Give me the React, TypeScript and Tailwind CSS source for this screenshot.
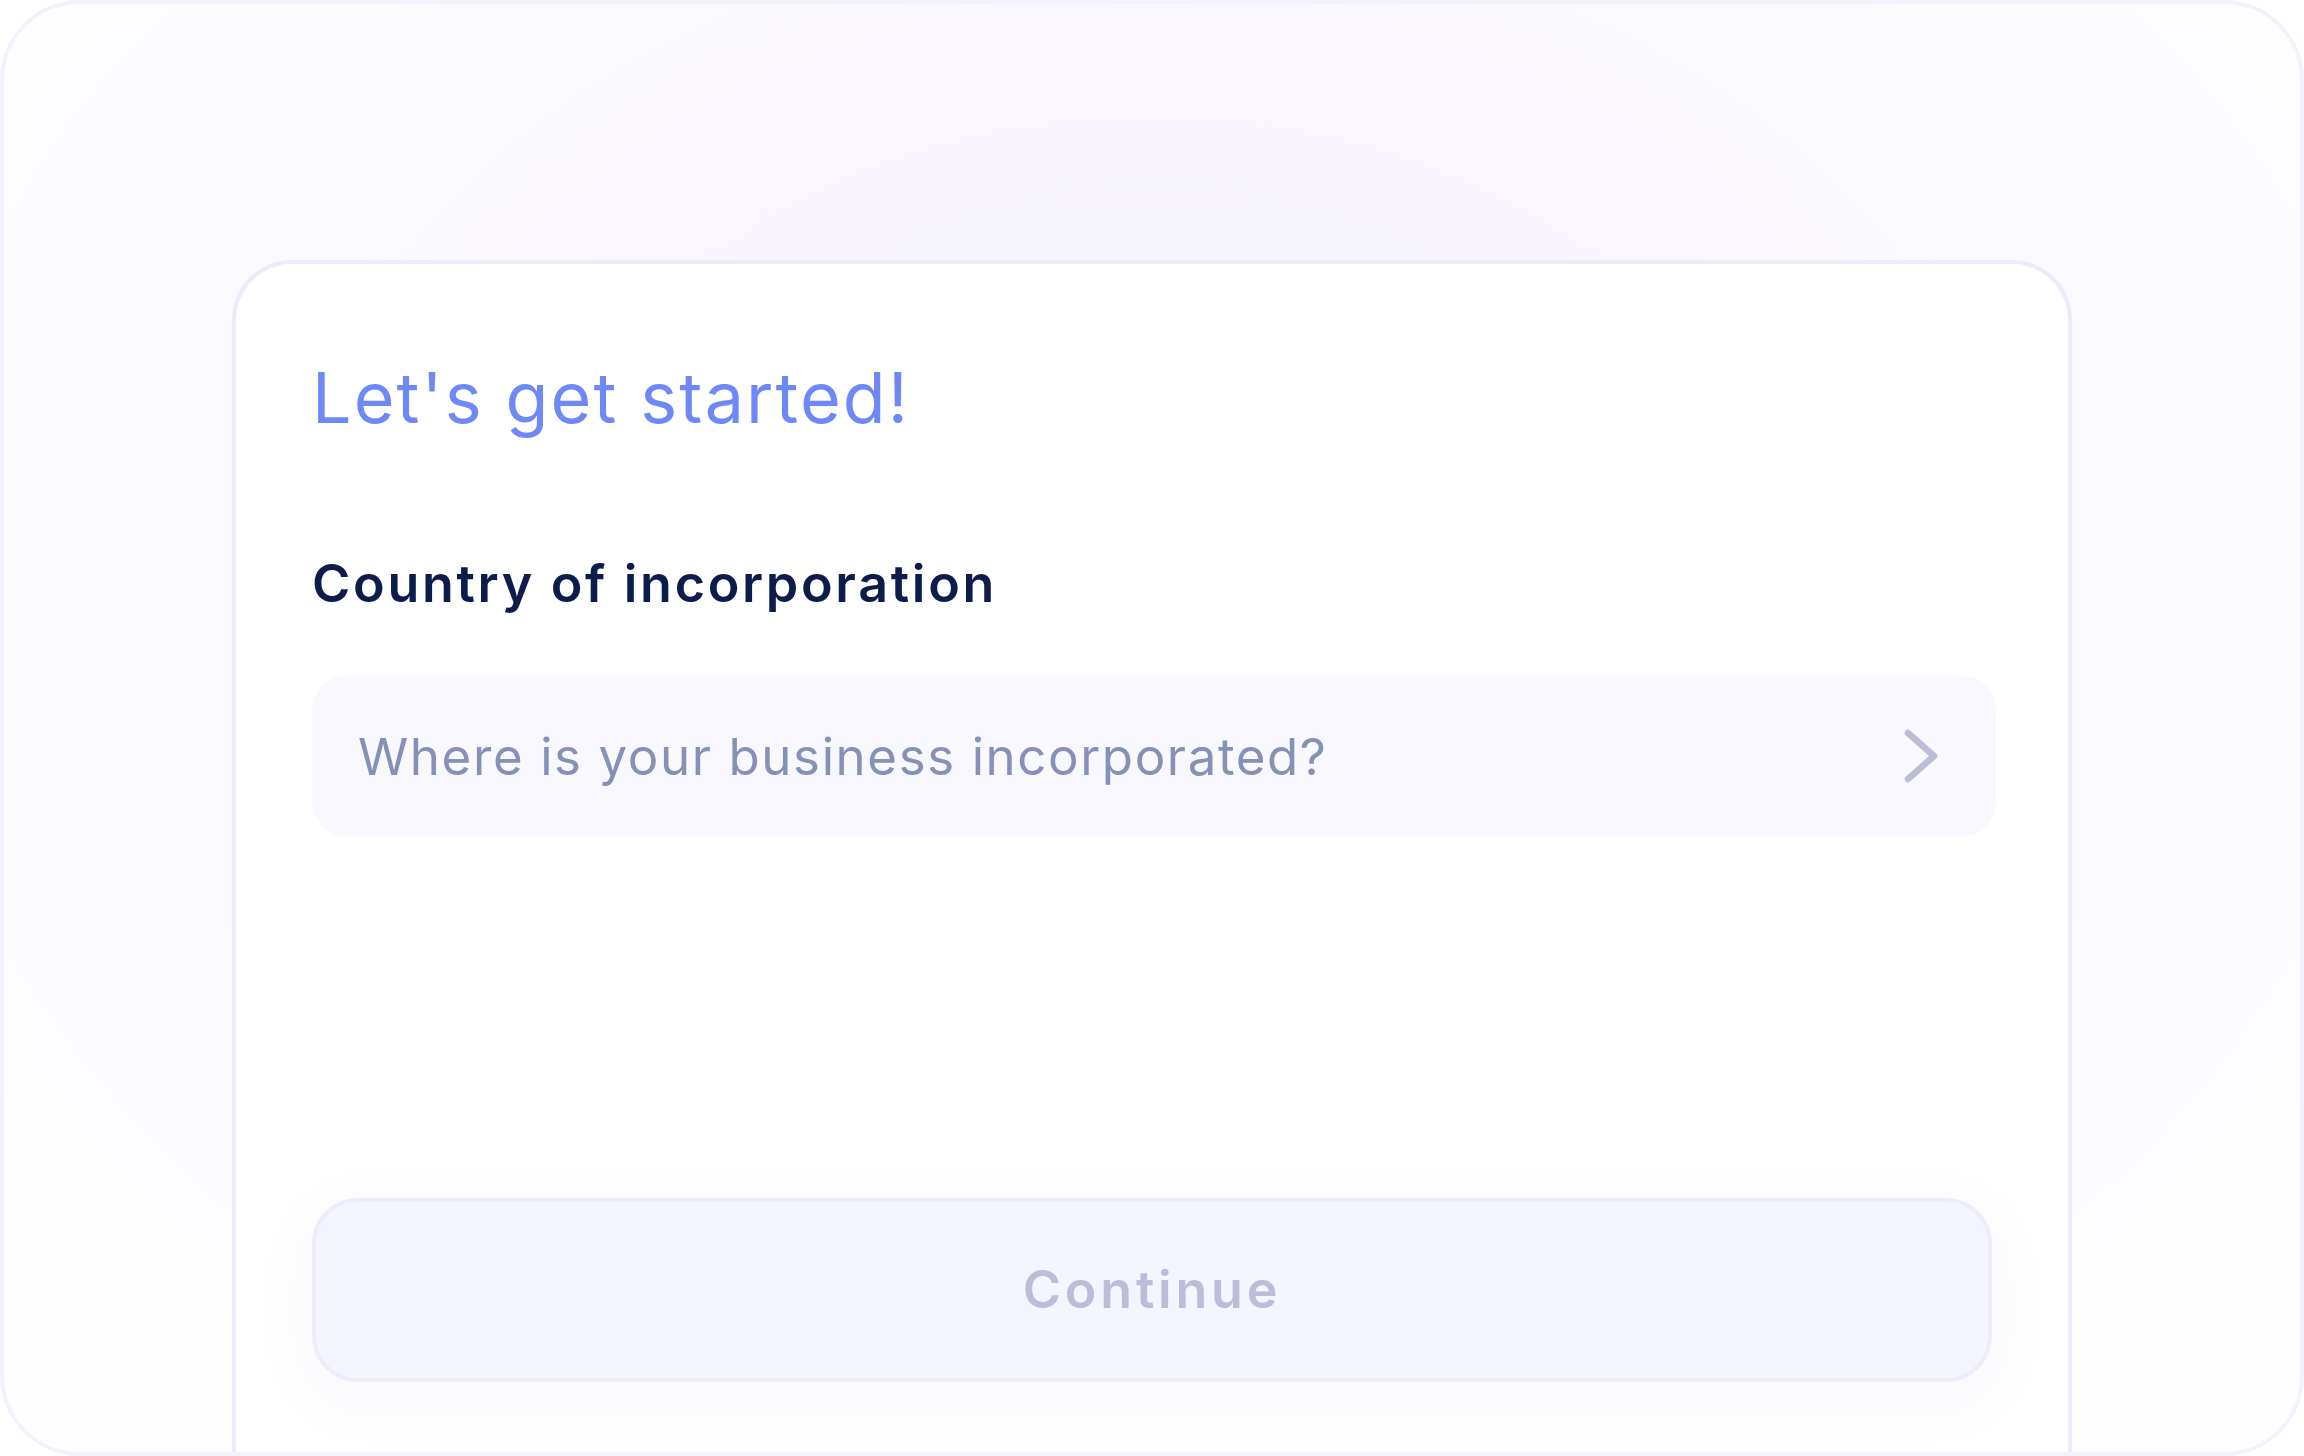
import React from 'react';

// Onboarding step: pick the country of incorporation.
// The card is taller than the frame on purpose — the frame clips its bottom.
const font = { fontFamily: 'Inter, "Noto Sans", sans-serif' };

function Chevron() {
  return (
    <svg width="34" height="54" viewBox="0 0 34 54" fill="none" aria-hidden>
      <path
        d="M4 4 L30 27 L4 50"
        stroke="#bdbcd9"
        strokeWidth="6.5"
        strokeLinecap="round"
        strokeLinejoin="round"
      />
    </svg>
  );
}

export default function App() {
  return (
    <div
      style={font}
      className="flex h-[1456px] w-[2304px] justify-center overflow-hidden rounded-[80px] border-4 border-[#f3f3fd] bg-[radial-gradient(ellipse_at_50%_40%,#f7f4fc_0%,#f9f7fd_45%,#fefeff_85%)] pt-[256px]"
    >
      <div className="h-[1400px] w-[1840px] shrink-0 rounded-t-[60px] border-4 border-b-0 border-[#ebebfc] bg-white pl-[76px] pr-[72px]">
        <h1 className="mt-[99px] text-[70px] leading-none font-normal tracking-[2.1px] text-[#6f88f8]">
          Let&apos;s get started!
        </h1>

        <div className="mt-[125px] text-[52px] leading-none font-semibold tracking-[2.7px] text-[#0d1d4b]">
          Country of incorporation
        </div>

        <button
          type="button"
          className="mt-[65px] flex h-[162px] w-full items-center justify-between rounded-[36px] bg-[#f8f8fe] pr-[58px] pl-[46px] text-left"
        >
          <span className="text-[51px] leading-none font-normal tracking-[1.6px] text-[#8591b6]">
            Where is your business incorporated?
          </span>
          <Chevron />
        </button>

        <div className="mt-[361px] pr-[4px]">
          <button
            type="button"
            disabled
            className="flex h-[184px] w-full items-center justify-center rounded-[46px] border-4 border-[#ececfa] bg-[#f4f5fe] text-[52px] leading-none font-semibold tracking-[3.8px] text-[#bdbcd9] shadow-[0_16px_60px_rgba(130,130,220,0.07)]"
          >
            Continue
          </button>
        </div>
      </div>
    </div>
  );
}
